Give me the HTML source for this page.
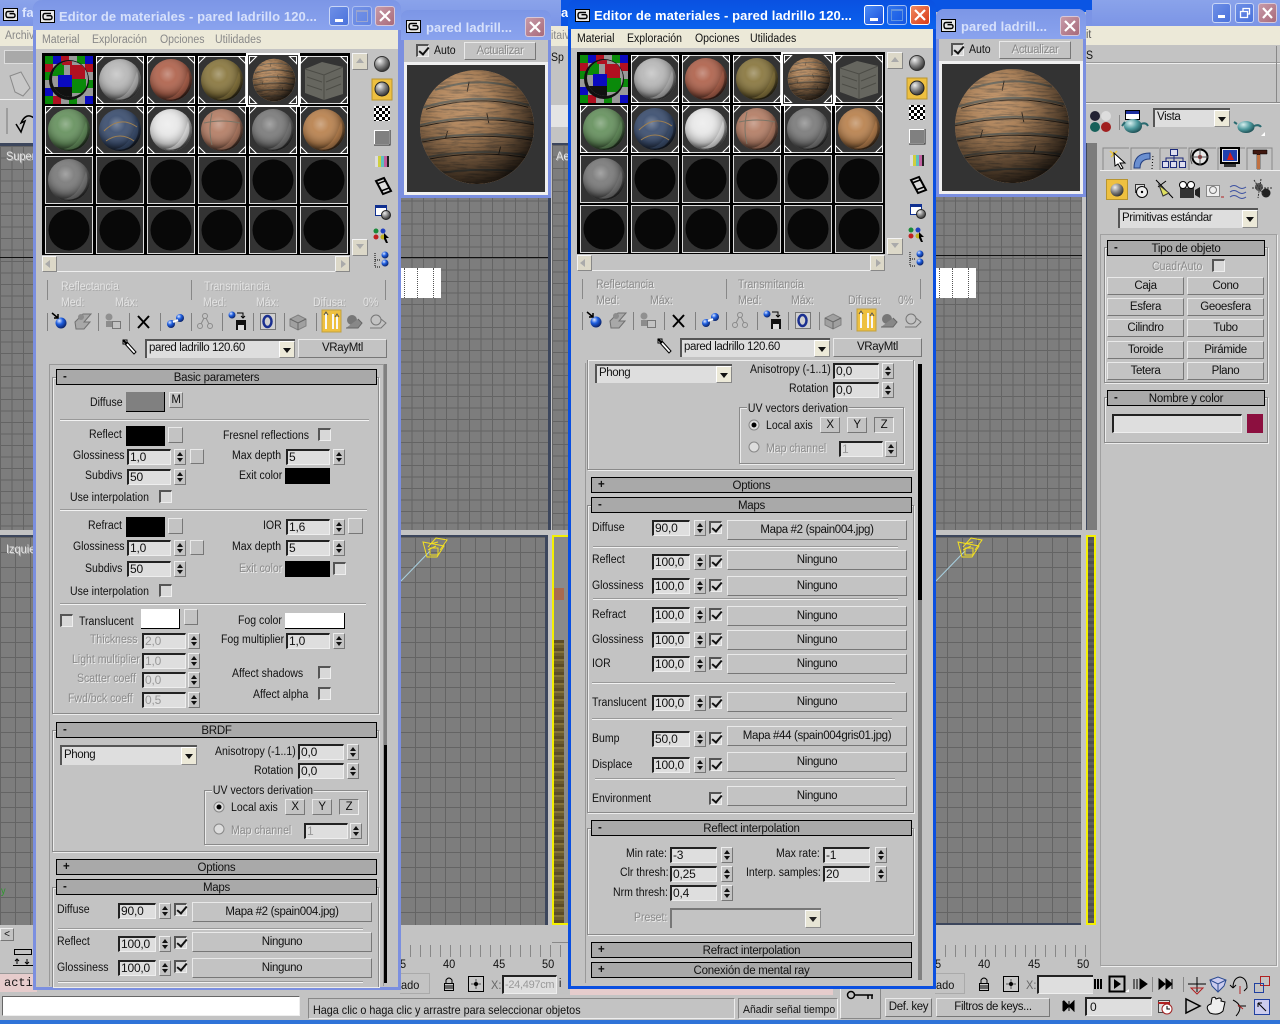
<!DOCTYPE html>
<html><head><meta charset="utf-8"><style>
*{box-sizing:border-box}
html,body{margin:0;padding:0;width:1280px;height:1024px;overflow:hidden;background:#c3c3c3}
body{position:relative;font:11.5px "Liberation Sans",sans-serif;color:#111}
div,i,svg{position:absolute;display:block}
i{font-style:normal;white-space:nowrap;line-height:14px;transform:translateY(1px) scaleX(.915);transform-origin:0 0}
.d{color:#8a8a8a;text-shadow:1px 1px 0 #eee}
.w{color:#e4e4e4;text-shadow:1px 1px 0 #aaa}
.vp{background-color:#7d7d7d;background-image:linear-gradient(#646464 1px,transparent 1px),linear-gradient(90deg,#646464 1px,transparent 1px);background-size:11.5px 11.5px}
.vp2{background-size:15px 15px}
.f{background:#dedede;border:1px solid;border-color:#222 #eee #eee #222;border-width:2px 1px 1px 2px;width:44px;height:16px;line-height:13px;padding-left:1px;font-size:12px;letter-spacing:-.2px;color:#111;white-space:nowrap;overflow:hidden}
.fd{color:#999}
.sp{width:12px;height:16px;background:#c3c3c3;border:1px solid;border-color:#eee #777 #777 #eee}
.sp:before{content:"";position:absolute;left:2px;top:2px;border:3px solid transparent;border-top:0;border-bottom:4px solid #111}
.sp:after{content:"";position:absolute;left:2px;bottom:2px;border:3px solid transparent;border-bottom:0;border-top:4px solid #111}
.c{width:13px;height:13px;background:#d8d8d8;border:1px solid;border-color:#555 #eee #eee #555;border-width:2px 1px 1px 2px}
.k:after{content:"";position:absolute;left:3px;top:-1px;width:4px;height:8px;border:solid #111;border-width:0 2px 2px 0;transform:rotate(40deg)}
.b{background:#c3c3c3;border:1px solid;border-color:#e9e9e9 #777 #777 #e9e9e9;text-align:center;line-height:16px;font-size:11.5px;letter-spacing:-.35px;white-space:nowrap}
.b[style*="height:20px"]{line-height:18px}
.sb{background:#dcd8c8;border:1px solid;border-color:#f4f4f4 #888 #888 #f4f4f4;width:15px;height:16px}
.sb:after{content:"";position:absolute;left:3px;top:4px;border:4px solid transparent}
.up:after{border-top:0;border-bottom:5px solid #aaa}
.dn:after{border-bottom:0;border-top:5px solid #aaa}
.lf:after{left:2px;top:3px;border-left:0;border-right:5px solid #aaa}
.rt:after{left:5px;top:3px;border-right:0;border-left:5px solid #aaa}
.h{left:56px;width:321px;height:16px;border:1px solid #000;background:#a9a9a9;text-align:center;line-height:16px;font-size:11.5px;letter-spacing:-.25px}
.h u{position:absolute;left:6px;top:-1px;text-decoration:none;font-weight:bold}
.g{border:1px solid #8a8a8a;box-shadow:1px 1px 0 #ececec,inset 1px 1px 0 #ececec}
.ln{height:1px;background:#f2f2f2;box-shadow:0 -1px 0 #999}
.sw{background:#000}
.dd{background:#dedede;border:solid #555;border-width:2px 0 0 2px;line-height:15px;padding-left:2px;font-size:11.5px;letter-spacing:-.4px;white-space:nowrap}
.dd b{position:absolute;right:0;top:0;bottom:0;width:16px;background:#ece9d8;border:1px solid;border-color:#fff #888 #888 #fff}
.dd b:after{content:"";position:absolute;left:3px;top:6px;border:4px solid transparent;border-bottom:0;border-top:5px solid #111}
.wb{width:20px;height:20px;border-radius:3px;border:1px solid #fff}
.ia{background:linear-gradient(135deg,#6e8fe6,#4a72dc);border-color:#c9d6f6}
.ix{background:linear-gradient(135deg,#c79aa8,#a86a7a);border-color:#d8c8d8}
.aa{background:linear-gradient(135deg,#4b8cf5,#1b50dc)}
.ax{background:linear-gradient(135deg,#f08a60,#d83a18)}
i.tl{transform:none;font:bold 13px "Liberation Sans",sans-serif;white-space:nowrap;line-height:16px;letter-spacing:.1px}
</style></head><body>
<svg width="0" height="0" style="left:0;top:0"><defs>
<radialGradient id="sh" cx=".42" cy=".36" r=".72"><stop offset="0" stop-color="#fff" stop-opacity=".32"/><stop offset=".28" stop-color="#fff" stop-opacity=".06"/><stop offset=".66" stop-color="#000" stop-opacity=".25"/><stop offset=".95" stop-color="#000" stop-opacity=".92"/></radialGradient>
<radialGradient id="bs" cx=".36" cy=".28" r=".82"><stop offset="0" stop-color="#fff" stop-opacity=".04"/><stop offset=".35" stop-color="#000" stop-opacity=".12"/><stop offset=".7" stop-color="#000" stop-opacity=".55"/><stop offset="1" stop-color="#000" stop-opacity=".95"/></radialGradient>
<filter id="tx" x="0" y="0" width="100%" height="100%"><feTurbulence type="fractalNoise" baseFrequency=".06 .5" numOctaves="4" seed="11"/><feColorMatrix values="0 0 0 0 .16 0 0 0 0 .11 0 0 0 0 .07 1.9 0 0 0 -.8"/></filter>
<clipPath id="cs"><circle cx="60" cy="60" r="58"/></clipPath>
<symbol id="brick" viewBox="0 0 120 120"><g clip-path="url(#cs)"><rect width="120" height="120" fill="#bd8f63"/>
<g fill="none" stroke="#6f6d62" stroke-linecap="round"><path d="M18 22Q60 8 100 20" stroke-width="2"/><path d="M6 40Q60 24 114 38" stroke-width="2.400"/><path d="M2 58Q60 44 118 56" stroke-width="2"/><path d="M0 74Q60 62 120 72" stroke-width="2"/><path d="M2 92Q60 80 118 90" stroke-width="2"/><path d="M14 108Q60 100 108 106" stroke-width="2"/></g>
<g fill="none" stroke="#2a2119" stroke-width="1"><path d="M8 42Q60 26 112 40"/><path d="M1 60Q60 46 119 58"/><path d="M0 76Q60 64 120 74"/><path d="M4 94Q60 82 116 92"/><path d="M52 14L50 24M70 46L72 56M30 64L28 72M84 80L82 88"/></g>
<rect width="120" height="120" filter="url(#tx)"/><circle cx="60" cy="60" r="58" fill="url(#bs)"/></g></symbol>
<symbol id="ball" viewBox="0 0 48 48"><circle cx="24" cy="24" r="21" fill="currentColor"/><circle cx="24" cy="24" r="21" fill="url(#sh)"/><path d="M41 15Q46 30 33 41Q26 45 18 43Q34 42 41 15Z" fill="currentColor" opacity=".5"/></symbol>
<symbol id="cor" viewBox="0 0 48 48"><g fill="none" stroke="#fff" stroke-width="1"><path d="M.5 7.500V.5H7.500ZM47.500 7.500V.5H40.500ZM.5 40.500V47.500H7.500ZM47.500 40.500V47.500H40.500Z"/></g></symbol>
<symbol id="logo" viewBox="0 0 15 13"><rect width="15" height="13" fill="#000"/><rect x="1" y="1" width="13" height="11" fill="#e8e8e8"/><path d="M11 3.500H5Q3 3.500 3 6.500T5 9.500H10Q12 9.500 12 7.500T10 5.700H6.500" fill="none" stroke="#000" stroke-width="1.400"/></symbol>
<symbol id="slots" viewBox="0 0 308 202">
<rect width="308" height="202" fill="#000"/>
<g fill="#333" stroke="#dcdcdc"><rect x="54.500" y="3.500" width="47" height="47"/><rect x="105.500" y="3.500" width="47" height="47"/><rect x="156.500" y="3.500" width="47" height="47"/><rect x="207.500" y="3.500" width="47" height="47"/><rect x="258.500" y="3.500" width="47" height="47"/>
<rect x="3.500" y="53.500" width="47" height="47"/><rect x="54.500" y="53.500" width="47" height="47"/><rect x="105.500" y="53.500" width="47" height="47"/><rect x="156.500" y="53.500" width="47" height="47"/><rect x="207.500" y="53.500" width="47" height="47"/><rect x="258.500" y="53.500" width="47" height="47"/>
<rect x="3.500" y="103.500" width="47" height="47"/><rect x="54.500" y="103.500" width="47" height="47"/><rect x="105.500" y="103.500" width="47" height="47"/><rect x="156.500" y="103.500" width="47" height="47"/><rect x="207.500" y="103.500" width="47" height="47"/><rect x="258.500" y="103.500" width="47" height="47"/>
<rect x="3.500" y="153.500" width="47" height="47"/><rect x="54.500" y="153.500" width="47" height="47"/><rect x="105.500" y="153.500" width="47" height="47"/><rect x="156.500" y="153.500" width="47" height="47"/><rect x="207.500" y="153.500" width="47" height="47"/><rect x="258.500" y="153.500" width="47" height="47"/></g>
<rect x="3" y="3" width="48" height="48" fill="#999"/>
<g fill="#0a8a0a"><rect x="3" y="3" width="8" height="8"/><rect x="35" y="3" width="8" height="8"/><rect x="3" y="19" width="8" height="8"/><rect x="3" y="43" width="8" height="8"/><rect x="43" y="27" width="8" height="8"/><rect x="27" y="43" width="8" height="8"/></g>
<g fill="#0a0ac0"><rect x="11" y="3" width="8" height="8"/><rect x="43" y="3" width="8" height="8"/><rect x="3" y="35" width="8" height="8"/><rect x="43" y="43" width="8" height="8"/></g>
<g fill="#b01020"><rect x="19" y="3" width="8" height="8"/><rect x="3" y="11" width="8" height="8"/><rect x="11" y="43" width="8" height="8"/><rect x="43" y="11" width="8" height="8"/></g>
<circle cx="27" cy="27" r="20" fill="#111"/>
<clipPath id="c1"><circle cx="28" cy="26" r="18"/></clipPath>
<g clip-path="url(#c1)"><rect x="8" y="6" width="40" height="40" fill="#999"/><rect x="8" y="10" width="14" height="13" fill="#0a8a0a"/><rect x="28" y="12" width="15" height="14" fill="#b01020"/><rect x="16" y="22" width="14" height="14" fill="#0a0ac0"/><rect x="30" y="26" width="14" height="14" fill="#0a8a0a"/><rect x="10" y="34" width="20" height="14" fill="#111"/><rect x="20" y="6" width="10" height="6" fill="#b01020"/></g>
<use href="#ball" x="54" y="3" width="48" height="48" style="color:#b8b8b8"/><use href="#ball" x="105" y="3" width="48" height="48" style="color:#b0644e"/><use href="#ball" x="156" y="3" width="48" height="48" style="color:#8a7840"/>
<rect x="205" y="1" width="52" height="52" fill="#333" stroke="#fff" stroke-width="2"/><use href="#brick" x="210" y="5" width="44" height="44"/>
<path d="M263 16L280 9L301 14V41L282 47L263 40Z" fill="#66665f"/><path d="M263 16L282 22L301 14M282 22V47M265 24L280 29M265 32L280 37M284 29L299 23M284 37L299 31" fill="none" stroke="#4c4c46"/>
<use href="#ball" x="3" y="53" width="48" height="48" style="color:#67925f"/><use href="#ball" x="54" y="53" width="48" height="48" style="color:#3c4f70"/><path d="M62 78Q78 62 95 74M64 88Q78 78 92 88" stroke="#a08050" fill="none"/>
<use href="#ball" x="105" y="53" width="48" height="48" style="color:#e8e8e8"/><use href="#ball" x="156" y="53" width="48" height="48" style="color:#b47e66"/><path d="M162 70Q180 66 198 70M170 60Q166 76 170 92" stroke="#7a7466" fill="none"/>
<use href="#ball" x="207" y="53" width="48" height="48" style="color:#7c7c7c"/><use href="#ball" x="258" y="53" width="48" height="48" style="color:#b9824f"/>
<use href="#ball" x="3" y="103" width="48" height="48" style="color:#7b7b7b"/>
<g fill="#080808"><circle cx="78" cy="127" r="20.500"/><circle cx="129" cy="127" r="20.500"/><circle cx="180" cy="127" r="20.500"/><circle cx="231" cy="127" r="20.500"/><circle cx="282" cy="127" r="20.500"/><circle cx="27" cy="177" r="20.500"/><circle cx="78" cy="177" r="20.500"/><circle cx="129" cy="177" r="20.500"/><circle cx="180" cy="177" r="20.500"/><circle cx="231" cy="177" r="20.500"/><circle cx="282" cy="177" r="20.500"/></g>
<use href="#cor" x="54" y="3" width="48" height="48"/><use href="#cor" x="105" y="3" width="48" height="48"/><use href="#cor" x="156" y="3" width="48" height="48"/><use href="#cor" x="207" y="3" width="48" height="48"/><use href="#cor" x="258" y="3" width="48" height="48"/>
<use href="#cor" x="3" y="53" width="48" height="48"/><use href="#cor" x="54" y="53" width="48" height="48"/><use href="#cor" x="105" y="53" width="48" height="48"/><use href="#cor" x="156" y="53" width="48" height="48"/><use href="#cor" x="207" y="53" width="48" height="48"/><use href="#cor" x="258" y="53" width="48" height="48"/>
</symbol>
<radialGradient id="bb" cx=".35" cy=".3" r=".8"><stop offset="0" stop-color="#dfe8ff"/><stop offset=".4" stop-color="#1f5fe0"/><stop offset="1" stop-color="#06154f"/></radialGradient>
<radialGradient id="gb" cx=".35" cy=".3" r=".8"><stop offset="0" stop-color="#eee"/><stop offset=".5" stop-color="#808080"/><stop offset="1" stop-color="#222"/></radialGradient>
<radialGradient id="tp" cx=".35" cy=".3" r=".8"><stop offset="0" stop-color="#d8f0f0"/><stop offset=".5" stop-color="#4f9a9e"/><stop offset="1" stop-color="#123f44"/></radialGradient>
<pattern id="chk" width="6" height="6" patternUnits="userSpaceOnUse"><rect width="6" height="6" fill="#fff"/><rect width="3" height="3" fill="#000"/><rect x="3" y="3" width="3" height="3" fill="#000"/></pattern>
<symbol id="side" viewBox="368 53 26 216">
<circle cx="381" cy="64" r="7.500" fill="url(#gb)" stroke="#333"/>
<rect x="371" y="79" width="20" height="21" fill="#eec040" stroke="#b89530"/><circle cx="381" cy="89" r="7" fill="url(#gb)" stroke="#222"/>
<rect x="373" y="106" width="16" height="15" fill="url(#chk)"/>
<rect x="373.500" y="130.500" width="15" height="14" fill="#808080" stroke="#fff"/><path d="M373 145h16v-15" stroke="#222" fill="none"/>
<rect x="374" y="156" width="3" height="11" fill="#ddd"/><rect x="377" y="156" width="3" height="11" fill="#cfcf40"/><rect x="380" y="156" width="3" height="11" fill="#60c0c0"/><rect x="383" y="156" width="3" height="11" fill="#c060a0"/><rect x="386" y="156" width="2" height="11" fill="#222"/>
<path d="M375 181L383 178L390 191L382 194Z" fill="#ddd" stroke="#000" stroke-width="2"/><path d="M376 184L384 181M380 191L388 188" stroke="#000" stroke-width="1.500"/>
<rect x="374.500" y="205.500" width="11" height="10" fill="#fff" stroke="#103090"/><rect x="374" y="205" width="12" height="3" fill="#103090"/><circle cx="385" cy="215" r="4.500" fill="url(#gb)" stroke="#222"/>
<circle cx="375" cy="231" r="2.500" fill="#1a8a3a"/><circle cx="382" cy="231" r="2.500" fill="#2040c0"/><circle cx="375" cy="237" r="2.500" fill="#c02020"/><circle cx="382" cy="237" r="2.500" fill="#c0b020"/><path d="M383 233L388 238L385 238L387 243L385 243L383 239Z" fill="#000"/>
<path d="M374 253V267H380M374 260H380" stroke="#000" stroke-dasharray="1 1" fill="none"/><circle cx="384" cy="255" r="3.500" fill="url(#bb)"/><circle cx="384" cy="263" r="3.500" fill="url(#bb)"/>
</symbol>
<symbol id="tool" viewBox="46 308 346 26">
<g stroke="#808080"><path d="M47.500 313V331M98.500 313V331M129.500 313V331M160.500 313V331M191.500 313V331M222.500 313V331M253.500 313V331M284.500 313V331M316.500 313V331"/></g>
<circle cx="61" cy="323" r="5.500" fill="url(#bb)"/><path d="M52 313L58 318M58 314V318H54" stroke="#000" stroke-width="1.500" fill="none"/>
<path d="M75 322L83 314H91L84 322H90L84 329H76Z" fill="#a8a8a8" stroke="#707070"/><circle cx="81" cy="317" r="3" fill="#8c8c8c"/>
<circle cx="109" cy="317" r="3.500" fill="#909090"/><rect x="106" y="321" width="7" height="6" fill="#8c8c8c"/><rect x="112.500" y="321.500" width="8" height="7" fill="none" stroke="#777"/>
<path d="M138 316L149 328M149 316L138 328" stroke="#000" stroke-width="2"/>
<circle cx="171" cy="324" r="4" fill="url(#bb)"/><circle cx="180" cy="318" r="4" fill="url(#bb)"/><path d="M173 322L178 320" stroke="#fff" stroke-width="2"/>
<g fill="none" stroke="#8a8a8a"><circle cx="205" cy="316" r="2.500"/><circle cx="200" cy="326" r="2.500"/><circle cx="210" cy="326" r="2.500"/><path d="M204 318L201 324M206 318L209 324"/></g>
<circle cx="232" cy="315" r="3.500" fill="url(#bb)"/><rect x="236" y="320" width="10" height="10" fill="#111"/><rect x="238" y="325" width="6" height="5" fill="#ddd"/><path d="M237 313H243V318M241 316L243 318L245 316" stroke="#000" fill="none"/>
<rect x="260.500" y="313.500" width="15" height="16" fill="#d0d0d0" stroke="#777"/><ellipse cx="267.500" cy="321.500" rx="4" ry="5.500" fill="none" stroke="#1a2f90" stroke-width="2.500"/>
<path d="M298 315L306 319V326L298 330L290 326V319Z" fill="#a0a0a0" stroke="#808080"/><path d="M290 319L298 323L306 319M298 323V330" stroke="#666" fill="none"/>
<rect x="322" y="310" width="19" height="22" fill="#eec040" stroke="#c0a040"/><path d="M326 314V329M333 314V329M337 317V329" stroke="#f8f8f8" stroke-width="2"/><path d="M324 315L326 312L328 315M335 317L337 314L339 317" stroke="#555" fill="none"/>
<circle cx="352" cy="320" r="5" fill="#777"/><path d="M346 328H358L362 323L358 319" fill="#888" stroke="#666"/>
<circle cx="376" cy="320" r="5" fill="none" stroke="#777"/><path d="M370 328H381L386 323L381 319" fill="none" stroke="#777"/>
</symbol>
<symbol id="drop" viewBox="0 0 16 16"><path d="M1 1L5 1L5 3L14 13L12 15L3 5L1 5Z" fill="#fff" stroke="#000"/><path d="M1 1L5 5" stroke="#000" stroke-width="2"/></symbol>
</defs></svg>

<!-- application background: left half -->
<div style="left:0;top:0;width:561px;height:27px;background:linear-gradient(#8aa3ea,#7b94e6)"></div>
<svg width="15" height="13" style="left:3px;top:8px"><use href="#logo"/></svg>
<i class="tl" style="left:22px;top:5px;color:#dde6ff">fa</i>
<div style="left:0;top:26px;width:561px;height:20px;background:#ece9d8"></div>
<i style="left:5px;top:28px;color:#888">Archiv</i>
<div style="left:4px;top:50px;width:31px;height:14px;background:#a9a9a9;border:1px solid #ddd"></div>
<svg width="30" height="30" style="left:5px;top:68px"><path d="M5 8L16 4L25 20L18 28L10 24Z" fill="#c8c8c8" stroke="#8a8a8a"/></svg>
<div style="left:0;top:99px;width:36px;height:1px;background:#eee"></div>
<svg width="32" height="32" style="left:4px;top:104px"><path d="M3 4V30" stroke="#777"/><path d="M12 20L17 28L21 17L17 19Q22 8 30 14" fill="none" stroke="#000" stroke-width="1.500"/></svg>
<div class="vp" style="left:0;top:143px;width:36px;height:387px;border-top:3px solid #3c465c"></div>
<i class="w" style="left:6px;top:148px;font-size:12px">Super</i>
<div style="left:0;top:257px;width:36px;height:1px;background:#111"></div>
<div class="vp vp2" style="left:0;top:535px;width:36px;height:390px;border-top:2px solid #3c465c"></div>
<i class="w" style="left:6px;top:541px;font-size:12px">Izquie</i>
<i style="left:1px;top:884px;color:#2a9a2a;font-size:10px">y</i>
<div style="left:0;top:928px;width:14px;height:13px;background:#c3c3c3;border:1px solid;border-color:#eee #777 #777 #eee;font-size:10px;line-height:11px;text-align:center">&lt;</div>
<svg width="22" height="20" style="left:12px;top:947px"><rect x="2.500" y="2.500" width="17" height="5" fill="none" stroke="#000"/><path d="M5 12V17M3 14L5 12L7 14M15 12V17M13 15L15 17L17 15M1 18.500H21" stroke="#000" fill="none"/></svg>
<div style="left:0;top:973px;width:37px;height:19px;background:#e6cccc;border-top:1px solid #999"></div>
<i style="left:4px;top:976px;font:12px/14px 'Liberation Mono',monospace;transform:none">acti</i>
<div style="left:2px;top:996px;width:298px;height:20px;background:#fff;border:1px solid;border-color:#666 #eee #eee #666"></div>

<!-- left viewports centre -->
<div class="vp" style="left:400px;top:143px;width:148px;height:387px"></div>
<div style="left:400px;top:257px;width:148px;height:1px;background:#111"></div>
<div style="left:401px;top:268px;width:40px;height:30px;background:#fff"></div>
<div style="left:404px;top:268px;height:30px;border-left:1px dotted #555"></div>
<div style="left:417px;top:268px;height:30px;border-left:1px dotted #555"></div>
<div style="left:433px;top:268px;height:30px;border-left:1px dotted #555"></div>
<div style="left:548px;top:143px;width:3px;height:387px;background:#3c465c"></div>
<div class="vp vp2" style="left:400px;top:535px;width:145px;height:390px;border-top:2px solid #3c465c"></div>
<div style="left:545px;top:535px;width:3px;height:390px;background:#3c465c"></div>
<svg width="40" height="36" style="left:400px;top:535px;overflow:visible"><path d="M1 46L30 16" stroke="#a8d0e0"/><g fill="none" stroke="#f4e020" stroke-width="1"><path d="M23 7L44 11L37 22L27 22Z"/><path d="M28 12L36 3L47 5L40 15M30 9L38 7M28 15L36 11"/><path d="M30 13H38V20H30Z"/></g></svg>
<!-- strip x 550-570 -->
<div class="vp" style="left:552px;top:143px;width:20px;height:387px;border-top:2px solid #3c465c"></div>
<i class="w" style="left:556px;top:148px;font-size:12px">Ae</i>
<div style="left:561px;top:0;width:12px;height:27px;background:#0a55e4"></div>
<i class="tl" style="left:561px;top:5px;color:#fff">a</i>
<div style="left:550px;top:26px;width:22px;height:20px;background:#ece9d8"></div>
<i style="left:551px;top:28px;color:#888">itaiv</i>
<i style="left:551px;top:50px">Sp</i>
<div style="left:551px;top:105px;width:20px;height:22px;background:#e4e4e4"></div>
<div style="left:552px;top:535px;width:20px;height:390px;background:#8a8a8a;border:solid #f4f000;border-width:2px 0 2px 2px"></div>
<div style="left:554px;top:588px;width:10px;height:12px;background:#a86a50"></div>
<div style="left:554px;top:640px;width:10px;height:283px;background:repeating-linear-gradient(#5c4c26 0 3px,#84723a 3px 5px,#6c5c2e 5px 8px)"></div>
<div style="left:552px;top:942px;width:18px;height:1px;background:#888"></div>
<!-- trackbar left -->
<div style="left:400px;top:945px;width:170px;height:12px;background:repeating-linear-gradient(90deg,#888 0 1px,transparent 1px 10px)"></div>
<i style="left:400px;top:956px;font-size:12px">5</i><i style="left:443px;top:956px;font-size:12px">40</i><i style="left:493px;top:956px;font-size:12px">45</i><i style="left:542px;top:956px;font-size:12px">50</i>
<div style="left:400px;top:973px;width:30px;height:21px;border:1px solid #aaa;border-left:0"></div>
<i style="left:401px;top:977px;font-size:12px">ado</i>
<svg width="14" height="16" style="left:442px;top:976px"><rect x="2.500" y="7.500" width="9" height="7" fill="#ccc" stroke="#000"/><path d="M4 7V4Q7 0 10 4V7M3 10H11M3 12H11" stroke="#000" fill="none"/></svg>
<svg width="16" height="16" style="left:468px;top:976px"><rect x=".5" y=".5" width="15" height="15" fill="#c8c8c8" stroke="#000"/><path d="M8 3V13M3 8H13" stroke="#555"/><circle cx="8" cy="8" r="2" fill="#000"/></svg>
<i style="left:491px;top:977px;font-size:12px;color:#666">X:</i>
<div class="f fd" style="left:502px;top:975px;width:55px;height:19px;padding-top:2px;font-size:11px;letter-spacing:-.3px">-24,497cm</div>
<i style="left:559px;top:976px">i</i>
<!-- status -->
<div style="left:308px;top:998px;width:427px;height:21px;border:1px solid;border-color:#888 #eee #eee #888"></div>
<i style="left:313px;top:1002px;font-size:11.800px">Haga clic o haga clic y arrastre para seleccionar objetos</i>
<div style="left:738px;top:998px;width:100px;height:21px;border:1px solid;border-color:#888 #eee #eee #888"></div>
<i style="left:743px;top:1002px;font-size:11.400px">Añadir señal tiempo</i>
<div style="left:570px;top:989px;width:263px;height:6px;background:#e6cccc"></div>
<div style="left:0;top:1020px;width:1280px;height:4px;background:#2f73d8"></div>

<!-- right half top-->
<div style="left:930px;top:0;width:162px;height:12px;background:#0a55e4"></div>
<div style="left:1086px;top:10px;width:194px;height:17px;background:#7b94e6"></div>
<div style="left:1092px;top:0;width:188px;height:27px;background:linear-gradient(#8aa3ea,#7b94e6)"></div>
<div class="wb ia" style="left:1212px;top:3px;width:19px"><div style="left:5px;top:11px;width:7px;height:3px;background:#fff"></div></div>
<div class="wb ia" style="left:1235px;top:3px;width:19px"><svg width="17" height="18"><path d="M4.500 7.500H11.500V13.500H4.500ZM7 7V4.500H13.500V10H12" fill="none" stroke="#fff" stroke-width="1.300"/></svg></div>
<div class="wb ix" style="left:1258px;top:3px;width:19px"><svg width="17" height="18"><path d="M4 4L13 14M13 4L4 14" stroke="#fff" stroke-width="2.200"/></svg></div>
<div style="left:1086px;top:26px;width:194px;height:19px;background:#ece9d8"></div>
<i style="left:1086px;top:27px;color:#555">it</i>
<i style="left:1086px;top:48px">S</i>
<div style="left:1086px;top:63px;width:194px;height:1px;background:#eee;box-shadow:0 -1px 0 #999"></div>
<div style="left:1276px;top:46px;width:1px;height:56px;background:#888"></div>
<div style="left:1086px;top:102px;width:194px;height:1px;background:#888;box-shadow:0 1px 0 #eee"></div>
<svg width="194" height="40" style="left:1086px;top:100px"><circle cx="9" cy="16" r="5" fill="#223"/><circle cx="9" cy="27" r="5" fill="#16605a"/><circle cx="20" cy="16" r="5" fill="#ddd"/><circle cx="20" cy="27" r="5" fill="#a01f1f"/><path d="M33.500 15V30" stroke="#888"/>
<rect x="39.500" y="10.500" width="14" height="9" fill="#fff" stroke="#000"/><rect x="40" y="11" width="13" height="3" fill="#1c2fa0"/><ellipse cx="47" cy="26" rx="9" ry="7" fill="url(#tp)"/><path d="M55 24Q60 22 62 26M39 22L36 26" stroke="#2a6a70" stroke-width="2" fill="none"/>
<ellipse cx="160" cy="27" rx="8.500" ry="6" fill="url(#tp)"/><path d="M168 26Q173 24 175 27M151 24L148 22" stroke="#2a6a70" stroke-width="2" fill="none"/><path d="M175 36L179 36L179 32Z" fill="#fff"/></svg>
<div class="dd" style="left:1153px;top:108px;width:77px;height:19px">Vista<b></b></div>
<!-- right half viewports -->
<div class="vp" style="left:932px;top:143px;width:150px;height:387px"></div>
<div style="left:932px;top:255px;width:150px;height:1px;background:#111"></div>
<div style="left:936px;top:268px;width:40px;height:30px;background:#fff"></div>
<div style="left:939px;top:268px;height:30px;border-left:1px dotted #555"></div>
<div style="left:952px;top:268px;height:30px;border-left:1px dotted #555"></div>
<div style="left:968px;top:268px;height:30px;border-left:1px dotted #555"></div>
<div style="left:1086px;top:143px;width:11px;height:387px;background:#7c7c7c;border-left:1px solid #3c465c"></div>
<div class="vp vp2" style="left:932px;top:535px;width:149px;height:390px;border-top:2px solid #3c465c;border-bottom:2px solid #3c465c"></div>
<div style="left:1081px;top:535px;width:4px;height:390px;background:#c3c3c3"></div>
<div style="left:1086px;top:535px;width:10px;height:390px;background:repeating-linear-gradient(#505050 0 3px,#5e5e5e 3px 6px);border:2px solid #f4f000"></div>
<svg width="40" height="36" style="left:935px;top:535px;overflow:visible"><path d="M1 46L30 16" stroke="#a8d0e0"/><g fill="none" stroke="#f4e020" stroke-width="1"><path d="M23 7L44 11L37 22L27 22Z"/><path d="M28 12L36 3L47 5L40 15M30 9L38 7M28 15L36 11"/><path d="M30 13H38V20H30Z"/></g></svg>
<div style="left:935px;top:945px;width:160px;height:12px;background:repeating-linear-gradient(90deg,#888 0 1px,transparent 1px 10px)"></div>
<i style="left:935px;top:956px;font-size:12px">5</i><i style="left:978px;top:956px;font-size:12px">40</i><i style="left:1028px;top:956px;font-size:12px">45</i><i style="left:1077px;top:956px;font-size:12px">50</i>
<div style="left:935px;top:973px;width:30px;height:21px;border:1px solid #aaa;border-left:0"></div>
<i style="left:936px;top:977px;font-size:12px">ado</i>
<svg width="14" height="16" style="left:977px;top:976px"><rect x="2.500" y="7.500" width="9" height="7" fill="#ccc" stroke="#000"/><path d="M4 7V4Q7 0 10 4V7M3 10H11M3 12H11" stroke="#000" fill="none"/></svg>
<svg width="16" height="16" style="left:1003px;top:976px"><rect x=".5" y=".5" width="15" height="15" fill="#c8c8c8" stroke="#000"/><path d="M8 3V13M3 8H13" stroke="#555"/><circle cx="8" cy="8" r="2" fill="#000"/></svg>
<i style="left:1026px;top:977px;font-size:12px;color:#666">X:</i>
<div class="f" style="left:1037px;top:975px;width:56px;height:19px;border-right:0"></div>
<svg width="190" height="46" style="left:1090px;top:974px"><path d="M5 5V15M8 5V15M11 5V15" stroke="#000" stroke-width="2"/><rect x="19.500" y="2.500" width="15" height="15" fill="none" stroke="#000" stroke-width="2"/><path d="M24 5L31 10L24 15Z" fill="#000"/><path d="M35 18H39V15Z" fill="#fff"/><path d="M44 5V15M47 5V15M50 5L57 10L50 15Z" stroke="#000" fill="#000"/><path d="M62.500 3V18" stroke="#888"/><path d="M69 5L75 10L69 15ZM76 5L82 10L76 15ZM82 5V15" fill="#000" stroke="#000"/><path d="M93.500 3V18" stroke="#888"/>
<path d="M98 10H116M107 3V18" stroke="#000"/><path d="M101 14L107 20L113 14Z" fill="none" stroke="#b02020"/>
<path d="M120 6L128 3L136 6L134 12L128 18L122 12Z" fill="#cce" stroke="#2a4a90"/><path d="M120 6L128 10L136 6M128 10V18" stroke="#2a4a90" fill="none"/>
<path d="M143 14Q143 4 150 3Q157 4 157 14M143 14L140 11M143 14L146 11M157 14L154 17" stroke="#000" fill="none"/><path d="M150 12V20" stroke="#b02020"/>
<rect x="170.500" y="2.500" width="9" height="9" fill="none" stroke="#b02020"/><rect x="164.500" y="9.500" width="9" height="9" fill="none" stroke="#2040a0"/>
<path d="M96 25V39L110 32Z" fill="none" stroke="#000" stroke-width="1.500"/>
<path d="M120 39Q114 32 121 30L122 24Q125 22 126 25L129 24Q132 24 131 27L135 28L133 37Q128 42 120 39Z" fill="#eee" stroke="#000"/>
<path d="M143 26Q155 32 146 42M148 32H156" stroke="#000" fill="none"/><path d="M148 31L153 35" stroke="#b02020"/>
<rect x="164.500" y="25.500" width="15" height="15" fill="#cce" stroke="#2040a0"/><path d="M168 29L176 37M168 29V33M168 29H172" stroke="#000" fill="none"/></svg>
<!-- key area -->
<div style="left:840px;top:988px;width:41px;height:31px;border:1px solid;border-color:#eee #888 #888 #eee"></div>
<svg width="30" height="14" style="left:846px;top:990px"><circle cx="5" cy="5" r="3.500" fill="none" stroke="#000" stroke-width="1.500"/><path d="M9 5H27M22 5V9M26 5V9" stroke="#000" stroke-width="1.500"/></svg>
<div class="b" style="left:885px;top:998px;width:47px;height:19px">Def. key</div>
<div class="b" style="left:936px;top:998px;width:114px;height:19px">Filtros de keys...</div>
<svg width="14" height="12" style="left:1062px;top:1000px"><path d="M1 1V11M2 1L7 6L2 11ZM7 6L12 1V11Z" fill="#000" stroke="#000"/><path d="M7 1V11" stroke="#000"/></svg>
<div class="f" style="left:1085px;top:997px;width:67px;height:19px;padding-top:2px;padding-left:3px">0</div>
<svg width="18" height="16" style="left:1157px;top:999px"><rect x="1.500" y="1.500" width="11" height="12" fill="#ddd" stroke="#444"/><path d="M1 4H13" stroke="#b02020" stroke-width="2"/><circle cx="10" cy="10" r="5" fill="#fff" stroke="#a02020"/><path d="M10 7V10H13" stroke="#000" fill="none"/></svg>

<!-- command panel -->
<svg width="180" height="70" style="left:1100px;top:145px">
<g fill="none" stroke="#888"><path d="M3 25V3H29M31 25V3H59M60 25V3H87M89 25V3H116M118 25V3H145M147 25V3H172V25"/></g><path d="M0 25.500H180" stroke="#eee"/>
<path d="M10 6L18 13M11 12L17 6" stroke="#ecc840" stroke-width="1.500"/><path d="M14 11L25 21L20 21L23 26L21 27L18 22L15 24Z" fill="#fff" stroke="#000" transform="translate(0 -3)"/>
<path d="M34 23Q34 8 50 8V14Q40 14 40 23Z" fill="#6a8fd0" stroke="#233f80"/><path d="M52 24L53 10" stroke="#000" stroke-dasharray="1 2"/>
<g fill="none" stroke="#1c2a7a"><rect x="70.500" y="4.500" width="7" height="6" fill="#dde"/><rect x="62.500" y="16.500" width="6" height="6" fill="#dde"/><rect x="70.500" y="16.500" width="6" height="6" fill="#dde"/><rect x="79.500" y="16.500" width="6" height="6" fill="#dde"/><path d="M74 11V16M66 16V13H83V16"/></g>
<circle cx="100" cy="12" r="7.500" fill="#e8e8e8" stroke="#000" stroke-width="2"/><circle cx="100" cy="12" r="2" fill="#b02020"/><path d="M100 4V20M92 12H108" stroke="#555"/><path d="M92 5Q89 12 92 19" stroke="#555" fill="none"/>
<rect x="121" y="3" width="18" height="15" fill="#e8e8e8" stroke="#000" stroke-width="2"/><rect x="123" y="5" width="14" height="11" fill="#2040b0"/><path d="M127 15L130 7L134 15Z" fill="#d02020"/><rect x="124" y="19" width="12" height="3" fill="#333"/>
<path d="M153 5H167V9H160V24H157V9H153Z" fill="#401810" stroke="#000" stroke-width=".5"/><rect x="157" y="10" width="3" height="14" fill="#c07040"/></svg>
<svg width="26" height="26" style="left:1104px;top:176px"><rect x="2.500" y="3.500" width="21" height="20" fill="#eec040" stroke="#b89530"/><circle cx="13" cy="14" r="6.500" fill="url(#gb)"/></svg>
<svg width="170" height="30" style="left:1128px;top:176px">
<rect x="7.500" y="8.500" width="9" height="8" fill="#ddd" stroke="#333"/><circle cx="14" cy="16" r="5.500" fill="#eee" stroke="#000"/><circle cx="14" cy="16" r="1.200"/>
<path d="M28 4L45 22M30 11L38 5" stroke="#000"/><path d="M31 9L41 17L35 20Z" fill="#dfe060" stroke="#333"/>
<rect x="52" y="12" width="14" height="10" fill="#333"/><circle cx="55" cy="9" r="3.500" fill="#fff" stroke="#000"/><circle cx="63" cy="9" r="3.500" fill="#fff" stroke="#000"/><path d="M67 14L72 11V22L67 19Z" fill="#222"/>
<rect x="78.500" y="9.500" width="13" height="11" fill="#eee" stroke="#888"/><circle cx="85" cy="14" r="3.500" fill="none" stroke="#777"/><path d="M93 21H96" stroke="#b02020"/>
<path d="M102 11Q106 8 110 11T118 11M102 16Q106 13 110 16T118 16M102 21Q106 18 110 21T118 21" fill="none" stroke="#3a4fa0"/>
<circle cx="131" cy="11" r="4" fill="#555"/><circle cx="138" cy="17" r="4.500" fill="#222"/><path d="M126 4L136 20M124 12H144M133 3L130 22" stroke="#333" stroke-dasharray="2 1"/></svg>
<div class="dd" style="left:1118px;top:208px;width:140px;height:20px;padding-top:1px">Primitivas estándar<b></b></div>
<div style="left:1100px;top:234px;width:177px;height:732px;border:1px solid #a0a0a0;box-shadow:1px 1px 0 #eee"></div>
<div class="g" style="left:1104px;top:247px;width:164px;height:136px"></div>
<div class="h" style="left:1107px;top:240px;width:158px">Tipo de objeto<u>-</u></div>
<i class="d" style="left:1152px;top:259px">CuadrAuto</i><div class="c" style="left:1212px;top:259px"></div>
<div class="b" style="left:1107px;top:277px;width:77px;height:18px">Caja</div><div class="b" style="left:1187px;top:277px;width:77px;height:18px">Cono</div>
<div class="b" style="left:1107px;top:298px;width:77px;height:18px">Esfera</div><div class="b" style="left:1187px;top:298px;width:77px;height:18px">Geoesfera</div>
<div class="b" style="left:1107px;top:319px;width:77px;height:18px">Cilindro</div><div class="b" style="left:1187px;top:319px;width:77px;height:18px">Tubo</div>
<div class="b" style="left:1107px;top:341px;width:77px;height:18px">Toroide</div><div class="b" style="left:1187px;top:341px;width:77px;height:18px">Pirámide</div>
<div class="b" style="left:1107px;top:362px;width:77px;height:18px">Tetera</div><div class="b" style="left:1187px;top:362px;width:77px;height:18px">Plano</div>
<div class="g" style="left:1104px;top:397px;width:164px;height:46px"></div>
<div class="h" style="left:1107px;top:390px;width:158px">Nombre y color<u>-</u></div>
<div class="f" style="left:1112px;top:414px;width:130px;height:19px"></div>
<div style="left:1247px;top:414px;width:16px;height:19px;background:#8c0f3f"></div>

<!-- preview windows -->
<div style="left:401px;top:10px;width:150px;height:188px;background:#c3c3c3;border:3px solid #7b8fe0;border-top:0;border-radius:8px 8px 0 0">
<div style="left:-3px;top:0;width:150px;height:30px;border-radius:8px 8px 0 0;background:linear-gradient(#7c96e6,#8aa3ee)"></div>
<svg width="15" height="13" style="left:2px;top:10px"><use href="#logo"/></svg>
<i class="tl" style="left:22px;top:10px;color:#d6e0fb">pared ladrill...</i>
<div class="wb ix" style="left:121px;top:7px"><svg width="18" height="18"><path d="M4 4L14 14M14 4L4 14" stroke="#fff" stroke-width="2.200"/></svg></div>
<div class="c k" style="left:12px;top:34px"></div><i style="left:30px;top:33px">Auto</i>
<div class="b d" style="left:60px;top:32px;width:72px;height:18px">Actualizar</div>
<div style="left:0;top:52px;width:144px;height:133px;background:#333;border:3px solid #f0f0f0"></div>
<svg width="118" height="118" style="left:14px;top:58px"><use href="#brick" width="118" height="118"/></svg>
</div>
<div style="left:936px;top:9px;width:150px;height:188px;background:#c3c3c3;border:3px solid #7b8fe0;border-top:0;border-radius:8px 8px 0 0">
<div style="left:-3px;top:0;width:150px;height:30px;border-radius:8px 8px 0 0;background:linear-gradient(#7c96e6,#8aa3ee)"></div>
<svg width="15" height="13" style="left:2px;top:10px"><use href="#logo"/></svg>
<i class="tl" style="left:22px;top:10px;color:#d6e0fb">pared ladrill...</i>
<div class="wb ix" style="left:121px;top:7px"><svg width="18" height="18"><path d="M4 4L14 14M14 4L4 14" stroke="#fff" stroke-width="2.200"/></svg></div>
<div class="c k" style="left:12px;top:34px"></div><i style="left:30px;top:33px">Auto</i>
<div class="b d" style="left:60px;top:32px;width:72px;height:18px">Actualizar</div>
<div style="left:0;top:52px;width:144px;height:133px;background:#333;border:3px solid #f0f0f0"></div>
<svg width="118" height="118" style="left:14px;top:58px"><use href="#brick" width="118" height="118"/></svg>
</div>

<!-- LEFT EDITOR -->
<div style="left:33px;top:0;width:368px;height:990px;background:#c3c3c3;border:3px solid #7b8fe0;border-top:0;border-radius:9px 9px 0 0"></div>
<div style="left:33px;top:0;width:368px;height:30px;border-radius:9px 9px 0 0;background:linear-gradient(#7c96e6,#8aa3ee)"></div>
<svg width="15" height="13" style="left:40px;top:10px"><use href="#logo"/></svg>
<i class="tl" style="left:59px;top:9px;color:#d6e0fb">Editor de materiales - pared ladrillo 120...</i>
<div class="wb ia" style="left:329px;top:6px"><div style="left:5px;top:12px;width:8px;height:3px;background:#fff"></div></div>
<div class="wb ia" style="left:352px;top:6px;opacity:.6"><div style="left:3px;top:3px;width:12px;height:12px;border:1px solid #aab;border-top-width:2px"></div></div>
<div class="wb ix" style="left:375px;top:6px"><svg width="18" height="18"><path d="M4 4L14 14M14 4L4 14" stroke="#fff" stroke-width="2.200"/></svg></div>
<div style="left:36px;top:30px;width:362px;height:19px;background:#ece9d8"></div>
<i style="left:42px;top:32px;color:#888">Material</i><i style="left:92px;top:32px;color:#888">Exploración</i><i style="left:160px;top:32px;color:#888">Opciones</i><i style="left:215px;top:32px;color:#888">Utilidades</i>
<svg width="308" height="202" style="left:42px;top:53px"><use href="#slots"/></svg>
<div class="sb up" style="left:352px;top:53px;width:16px;height:17px"></div><div class="sb dn" style="left:352px;top:239px;width:16px;height:17px"></div>
<div class="sb lf" style="left:42px;top:256px;height:16px"></div><div class="sb rt" style="left:335px;top:256px;height:16px"></div>
<div style="left:57px;top:256px;width:278px;height:16px;background:#c3c3c3;border-bottom:1px solid #eee"></div>
<svg width="24" height="216" style="left:369px;top:53px" viewBox="368 53 24 216"><use href="#side" x="368" y="53" width="26" height="216"/></svg>
<i class="w" style="left:61px;top:279px">Reflectancia</i><i class="w" style="left:204px;top:279px">Transmitancia</i>
<i class="w" style="left:61px;top:295px">Med:</i><i class="w" style="left:115px;top:295px">Máx:</i><i class="w" style="left:203px;top:295px">Med:</i><i class="w" style="left:256px;top:295px">Máx:</i><i class="w" style="left:313px;top:295px">Difusa:</i><i class="w" style="left:363px;top:295px">0%</i>
<div style="left:47px;top:280px;width:1px;height:20px;background:#888"></div><div style="left:191px;top:280px;width:1px;height:20px;background:#888"></div><div style="left:385px;top:280px;width:1px;height:20px;background:#888"></div>
<svg width="346" height="26" style="left:46px;top:308px"><use href="#tool"/></svg>
<svg width="16" height="16" style="left:122px;top:339px"><use href="#drop"/></svg>
<div class="dd" style="left:145px;top:339px;width:150px;height:19px">pared ladrillo 120.60<b></b></div>
<div class="b" style="left:298px;top:339px;width:89px;height:19px">VRayMtl</div>
<div style="left:49px;top:364px;width:335px;height:622px;border:1px solid #999;border-bottom:0"></div>
<div style="left:384px;top:364px;width:3px;height:381px;background:#808080"></div><div style="left:384px;top:745px;width:3px;height:238px;background:#000"></div>
<div class="g" style="left:52px;top:377px;width:327px;height:337px"></div>
<div class="h" style="top:369px">Basic parameters<u>-</u></div>
<i style="left:90px;top:395px">Diffuse</i><div style="left:126px;top:392px;width:39px;height:20px;background:#808080;border-bottom:1px solid #000;border-right:1px solid #000"></div><div class="b" style="left:169px;top:392px;width:14px;height:16px;line-height:14px">M</div>
<div class="ln" style="left:60px;top:420px;width:309px"></div>
<i style="left:89px;top:427px">Reflect</i><div class="sw" style="left:126px;top:426px;width:39px;height:20px"></div><div class="b" style="left:168px;top:427px;width:15px;height:16px"></div>
<i style="left:223px;top:428px">Fresnel reflections</i><div class="c" style="left:318px;top:428px"></div>
<i style="left:73px;top:448px">Glossiness</i><div class="f" style="left:127px;top:449px">1,0</div><div class="sp" style="left:174px;top:449px"></div><div class="b" style="left:190px;top:449px;width:14px;height:15px"></div>
<i style="left:232px;top:448px">Max depth</i><div class="f" style="left:286px;top:449px">5</div><div class="sp" style="left:333px;top:449px"></div>
<i style="left:85px;top:468px">Subdivs</i><div class="f" style="left:127px;top:469px">50</div><div class="sp" style="left:174px;top:469px"></div>
<i style="left:239px;top:468px">Exit color</i><div class="sw" style="left:285px;top:468px;width:45px;height:16px"></div>
<i style="left:70px;top:490px">Use interpolation</i><div class="c" style="left:159px;top:490px"></div>
<div class="ln" style="left:60px;top:510px;width:307px"></div>
<i style="left:88px;top:518px">Refract</i><div class="sw" style="left:126px;top:517px;width:39px;height:20px"></div><div class="b" style="left:168px;top:518px;width:15px;height:16px"></div>
<i style="left:263px;top:518px">IOR</i><div class="f" style="left:286px;top:519px">1,6</div><div class="sp" style="left:333px;top:519px"></div><div class="b" style="left:348px;top:518px;width:15px;height:16px"></div>
<i style="left:73px;top:539px">Glossiness</i><div class="f" style="left:127px;top:540px">1,0</div><div class="sp" style="left:174px;top:540px"></div><div class="b" style="left:190px;top:540px;width:14px;height:15px"></div>
<i style="left:232px;top:539px">Max depth</i><div class="f" style="left:286px;top:540px">5</div><div class="sp" style="left:333px;top:540px"></div>
<i style="left:85px;top:561px">Subdivs</i><div class="f" style="left:127px;top:561px">50</div><div class="sp" style="left:174px;top:561px"></div>
<i class="d" style="left:239px;top:561px">Exit color</i><div class="sw" style="left:285px;top:561px;width:45px;height:16px"></div><div class="c" style="left:333px;top:562px"></div>
<i style="left:70px;top:584px">Use interpolation</i><div class="c" style="left:159px;top:584px"></div>
<div class="ln" style="left:60px;top:604px;width:306px"></div>
<div class="c" style="left:60px;top:614px"></div><i style="left:79px;top:614px">Translucent</i><div style="left:141px;top:609px;width:39px;height:20px;background:#fff;border-right:1px solid #000;border-bottom:1px solid #000"></div><div class="b" style="left:184px;top:609px;width:14px;height:16px"></div>
<i style="left:238px;top:613px">Fog color</i><div style="left:285px;top:613px;width:60px;height:16px;background:#fff;border-right:1px solid #000;border-bottom:1px solid #000"></div>
<i class="d" style="left:90px;top:632px">Thickness</i><div class="f fd" style="left:142px;top:633px">2,0</div><div class="sp" style="left:188px;top:633px"></div>
<i style="left:221px;top:632px">Fog multiplier</i><div class="f" style="left:286px;top:633px">1,0</div><div class="sp" style="left:333px;top:633px"></div>
<i class="d" style="left:72px;top:652px">Light multiplier</i><div class="f fd" style="left:142px;top:653px">1,0</div><div class="sp" style="left:188px;top:653px"></div>
<i class="d" style="left:77px;top:671px">Scatter coeff</i><div class="f fd" style="left:142px;top:672px">0,0</div><div class="sp" style="left:188px;top:672px"></div>
<i class="d" style="left:68px;top:691px">Fwd/bck coeff</i><div class="f fd" style="left:142px;top:692px">0,5</div><div class="sp" style="left:188px;top:692px"></div>
<i style="left:232px;top:666px">Affect shadows</i><div class="c" style="left:318px;top:666px"></div>
<i style="left:253px;top:687px">Affect alpha</i><div class="c" style="left:318px;top:687px"></div>
<div class="g" style="left:52px;top:730px;width:327px;height:122px"></div>
<div class="h" style="top:722px">BRDF<u>-</u></div>
<div class="dd" style="left:60px;top:745px;width:137px;height:20px;padding-top:1px">Phong<b></b></div>
<i style="left:215px;top:744px">Anisotropy (-1..1)</i><div class="f" style="left:298px;top:744px;width:46px">0,0</div><div class="sp" style="left:347px;top:744px"></div>
<i style="left:254px;top:763px">Rotation</i><div class="f" style="left:298px;top:763px;width:46px">0,0</div><div class="sp" style="left:347px;top:763px"></div>
<div class="g" style="left:204px;top:790px;width:164px;height:55px"></div>
<i style="left:212px;top:783px;background:#c3c3c3;padding:0 1px">UV vectors derivation</i>
<svg width="14" height="36" style="left:213px;top:801px"><circle cx="6" cy="6" r="5" fill="#ddd" stroke="#888"/><circle cx="6" cy="6" r="2.500" fill="#000"/><circle cx="6" cy="28" r="5" fill="#ddd" stroke="#888"/></svg>
<i style="left:231px;top:800px">Local axis</i><div class="b" style="left:285px;top:799px;width:20px;height:16px;line-height:14px">X</div><div class="b" style="left:312px;top:799px;width:20px;height:16px;line-height:14px">Y</div><div class="b" style="left:339px;top:799px;width:20px;height:16px;line-height:14px;border-color:#777 #eee #eee #777">Z</div>
<i class="d" style="left:231px;top:823px">Map channel</i><div class="f fd" style="left:304px;top:823px">1</div><div class="sp" style="left:350px;top:823px"></div>
<div class="h" style="top:859px">Options<u>+</u></div>
<div class="g" style="left:52px;top:887px;width:327px;height:100px;border-bottom:0"></div>
<div class="h" style="top:879px">Maps<u>-</u></div>
<i style="left:57px;top:902px">Diffuse</i><div class="f" style="left:118px;top:903px;width:38px">90,0</div><div class="sp" style="left:159px;top:903px"></div><div class="c k" style="left:174px;top:903px"></div><div class="b" style="left:192px;top:902px;width:180px;height:20px">Mapa #2 (spain004.jpg)</div>
<div class="ln" style="left:58px;top:929px;width:305px"></div>
<i style="left:57px;top:934px">Reflect</i><div class="f" style="left:118px;top:936px;width:38px">100,0</div><div class="sp" style="left:159px;top:936px"></div><div class="c k" style="left:174px;top:936px"></div><div class="b" style="left:192px;top:932px;width:180px;height:20px">Ninguno</div>
<i style="left:57px;top:960px">Glossiness</i><div class="f" style="left:118px;top:960px;width:38px">100,0</div><div class="sp" style="left:159px;top:960px"></div><div class="c k" style="left:174px;top:960px"></div><div class="b" style="left:192px;top:958px;width:180px;height:20px">Ninguno</div>
<div class="ln" style="left:58px;top:982px;width:305px"></div>

<!-- RIGHT EDITOR -->
<div style="left:568px;top:0;width:368px;height:989px;background:#c3c3c3;border:3px solid #0a4fe0;border-top:0;border-radius:9px 9px 0 0"></div>
<div style="left:568px;top:-1px;width:368px;height:30px;border-radius:9px 9px 0 0;background:linear-gradient(#0a50e0,#0a62ee)"></div>
<div style="left:535px;top:-1px;width:745px;height:360px">
<svg width="15" height="13" style="left:40px;top:10px"><use href="#logo"/></svg>
<i class="tl" style="left:59px;top:9px;color:#fff">Editor de materiales - pared ladrillo 120...</i>
<div class="wb aa" style="left:329px;top:6px"><div style="left:5px;top:12px;width:8px;height:3px;background:#fff"></div></div>
<div class="wb aa" style="left:352px;top:6px;opacity:.6"><div style="left:3px;top:3px;width:12px;height:12px;border:1px solid #9bd;border-top-width:2px"></div></div>
<div class="wb ax" style="left:375px;top:6px"><svg width="18" height="18"><path d="M4 4L14 14M14 4L4 14" stroke="#fff" stroke-width="2.200"/></svg></div>
<div style="left:36px;top:30px;width:362px;height:19px;background:#ece9d8"></div>
<i style="left:42px;top:32px">Material</i><i style="left:92px;top:32px">Exploración</i><i style="left:160px;top:32px">Opciones</i><i style="left:215px;top:32px">Utilidades</i>
<svg width="308" height="202" style="left:42px;top:53px"><use href="#slots"/></svg>
<div class="sb up" style="left:352px;top:53px;width:16px;height:17px"></div><div class="sb dn" style="left:352px;top:239px;width:16px;height:17px"></div>
<div class="sb lf" style="left:42px;top:256px;height:16px"></div><div class="sb rt" style="left:335px;top:256px;height:16px"></div>
<div style="left:57px;top:256px;width:278px;height:16px;background:#c3c3c3;border-bottom:1px solid #eee"></div>
<svg width="24" height="216" style="left:369px;top:53px" viewBox="368 53 24 216"><use href="#side" x="368" y="53" width="26" height="216"/></svg>
<i class="d" style="left:61px;top:278px">Reflectancia</i><i class="d" style="left:203px;top:278px">Transmitancia</i>
<i class="d" style="left:61px;top:294px">Med:</i><i class="d" style="left:115px;top:294px">Máx:</i><i class="d" style="left:203px;top:294px">Med:</i><i class="d" style="left:256px;top:294px">Máx:</i><i class="d" style="left:313px;top:294px">Difusa:</i><i class="d" style="left:363px;top:294px">0%</i>
<div style="left:47px;top:280px;width:1px;height:20px;background:#888"></div><div style="left:191px;top:280px;width:1px;height:20px;background:#888"></div><div style="left:385px;top:280px;width:1px;height:20px;background:#888"></div>
<svg width="346" height="26" style="left:46px;top:308px"><use href="#tool"/></svg>
<svg width="16" height="16" style="left:122px;top:339px"><use href="#drop"/></svg>
<div class="dd" style="left:145px;top:339px;width:150px;height:19px">pared ladrillo 120.60<b></b></div>
<div class="b" style="left:298px;top:339px;width:89px;height:19px">VRayMtl</div>
</div>
<div style="left:585px;top:363px;width:333px;height:620px;border-left:1px solid #999"></div>
<div style="left:918px;top:364px;width:4px;height:236px;background:#000"></div><div style="left:918px;top:600px;width:4px;height:380px;background:#808080"></div>
<div class="g" style="left:587px;top:360px;width:327px;height:110px;border-top:0"></div>
<div class="dd" style="left:595px;top:364px;width:137px;height:19px">Phong<b></b></div>
<i style="left:750px;top:362px">Anisotropy (-1..1)</i><div class="f" style="left:833px;top:363px;width:46px">0,0</div><div class="sp" style="left:882px;top:363px"></div>
<i style="left:789px;top:381px">Rotation</i><div class="f" style="left:833px;top:382px;width:46px">0,0</div><div class="sp" style="left:882px;top:382px"></div>
<div class="g" style="left:739px;top:407px;width:165px;height:57px"></div>
<i style="left:747px;top:401px;background:#c3c3c3;padding:0 1px">UV vectors derivation</i>
<svg width="14" height="36" style="left:748px;top:419px"><circle cx="6" cy="6" r="5" fill="#ddd" stroke="#888"/><circle cx="6" cy="6" r="2.500" fill="#000"/><circle cx="6" cy="28" r="5" fill="#ddd" stroke="#888"/></svg>
<i style="left:766px;top:418px">Local axis</i><div class="b" style="left:820px;top:417px;width:20px;height:16px;line-height:14px">X</div><div class="b" style="left:847px;top:417px;width:20px;height:16px;line-height:14px">Y</div><div class="b" style="left:874px;top:417px;width:20px;height:16px;line-height:14px;border-color:#777 #eee #eee #777">Z</div>
<i class="d" style="left:766px;top:441px">Map channel</i><div class="f fd" style="left:839px;top:441px">1</div><div class="sp" style="left:885px;top:441px"></div>
<div class="h" style="left:591px;top:477px">Options<u>+</u></div>
<div class="g" style="left:587px;top:505px;width:327px;height:308px"></div>
<div class="h" style="left:591px;top:497px">Maps<u>-</u></div>
<i style="left:592px;top:520px">Diffuse</i><div class="f" style="left:652px;top:520px;width:38px">90,0</div><div class="sp" style="left:694px;top:520px"></div><div class="c k" style="left:709px;top:521px"></div><div class="b" style="left:727px;top:520px;width:180px;height:20px">Mapa #2 (spain004.jpg)</div>
<div class="ln" style="left:593px;top:547px;width:305px"></div>
<i style="left:592px;top:552px">Reflect</i><div class="f" style="left:652px;top:554px;width:38px">100,0</div><div class="sp" style="left:694px;top:554px"></div><div class="c k" style="left:709px;top:555px"></div><div class="b" style="left:727px;top:550px;width:180px;height:20px">Ninguno</div>
<i style="left:592px;top:578px">Glossiness</i><div class="f" style="left:652px;top:578px;width:38px">100,0</div><div class="sp" style="left:694px;top:578px"></div><div class="c k" style="left:709px;top:579px"></div><div class="b" style="left:727px;top:576px;width:180px;height:20px">Ninguno</div>
<div class="ln" style="left:593px;top:599px;width:305px"></div>
<i style="left:592px;top:607px">Refract</i><div class="f" style="left:652px;top:607px;width:38px">100,0</div><div class="sp" style="left:694px;top:607px"></div><div class="c k" style="left:709px;top:608px"></div><div class="b" style="left:727px;top:606px;width:180px;height:20px">Ninguno</div>
<i style="left:592px;top:632px">Glossiness</i><div class="f" style="left:652px;top:632px;width:38px">100,0</div><div class="sp" style="left:694px;top:632px"></div><div class="c k" style="left:709px;top:633px"></div><div class="b" style="left:727px;top:630px;width:180px;height:20px">Ninguno</div>
<i style="left:592px;top:656px">IOR</i><div class="f" style="left:652px;top:656px;width:38px">100,0</div><div class="sp" style="left:694px;top:656px"></div><div class="c k" style="left:709px;top:657px"></div><div class="b" style="left:727px;top:654px;width:180px;height:20px">Ninguno</div>
<div class="ln" style="left:592px;top:683px;width:303px"></div>
<i style="left:592px;top:695px">Translucent</i><div class="f" style="left:652px;top:695px;width:38px">100,0</div><div class="sp" style="left:694px;top:695px"></div><div class="c k" style="left:709px;top:696px"></div><div class="b" style="left:727px;top:692px;width:180px;height:20px">Ninguno</div>
<div class="ln" style="left:592px;top:719px;width:300px"></div>
<i style="left:592px;top:731px">Bump</i><div class="f" style="left:652px;top:731px;width:38px">50,0</div><div class="sp" style="left:694px;top:731px"></div><div class="c k" style="left:709px;top:732px"></div><div class="b" style="left:727px;top:726px;width:180px;height:20px">Mapa #44 (spain004gris01.jpg)</div>
<i style="left:592px;top:757px">Displace</i><div class="f" style="left:652px;top:757px;width:38px">100,0</div><div class="sp" style="left:694px;top:757px"></div><div class="c k" style="left:709px;top:758px"></div><div class="b" style="left:727px;top:752px;width:180px;height:20px">Ninguno</div>
<div class="ln" style="left:595px;top:779px;width:300px"></div>
<i style="left:592px;top:791px">Environment</i><div class="c k" style="left:709px;top:792px"></div><div class="b" style="left:727px;top:786px;width:180px;height:20px">Ninguno</div>
<div class="g" style="left:587px;top:828px;width:327px;height:107px"></div>
<div class="h" style="left:591px;top:820px">Reflect interpolation<u>-</u></div>
<i style="left:626px;top:846px">Min rate:</i><div class="f" style="left:670px;top:847px;width:47px">-3</div><div class="sp" style="left:721px;top:847px"></div>
<i style="left:776px;top:846px">Max rate:</i><div class="f" style="left:823px;top:847px;width:47px">-1</div><div class="sp" style="left:875px;top:847px"></div>
<i style="left:620px;top:865px">Clr thresh:</i><div class="f" style="left:670px;top:866px;width:47px">0,25</div><div class="sp" style="left:721px;top:866px"></div>
<i style="left:746px;top:865px">Interp. samples:</i><div class="f" style="left:823px;top:866px;width:47px">20</div><div class="sp" style="left:875px;top:866px"></div>
<i style="left:613px;top:885px">Nrm thresh:</i><div class="f" style="left:670px;top:885px;width:47px">0,4</div><div class="sp" style="left:721px;top:885px"></div>
<i class="d" style="left:634px;top:910px">Preset:</i><div class="dd" style="left:670px;top:908px;width:151px;height:20px;background:#c3c3c3;border-color:#777"><b style="opacity:.9"></b></div>
<div class="h" style="left:591px;top:942px">Refract interpolation<u>+</u></div>
<div class="h" style="left:591px;top:962px">Conexión de mental ray<u>+</u></div>
</body></html>
